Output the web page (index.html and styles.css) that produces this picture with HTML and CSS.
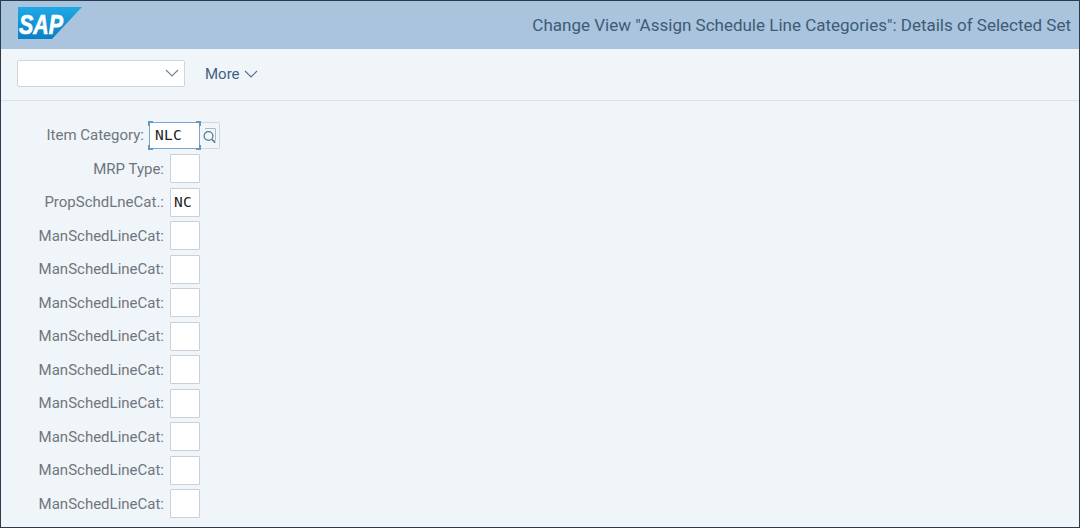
FILE: index.html
```html
<!DOCTYPE html>
<html lang="en">
<head>
    <meta charset="UTF-8">
    <meta name="viewport" content="width=device-width, initial-scale=1.0">
    <title>Change View</title>
    <link rel="stylesheet" href="styles.css">
</head>
<body>
    <div class="page">
        <header class="shell">
            <svg class="logo" width="64" height="32" viewBox="0 0 64 32">
                <defs>
                    <linearGradient id="sapBlue" x1="0" y1="0" x2="0" y2="1">
                        <stop offset="0" stop-color="#1fa9e6"/>
                        <stop offset="1" stop-color="#0a7fc4"/>
                    </linearGradient>
                </defs>
                <polygon points="0,0 64,0 34,32 0,32" fill="url(#sapBlue)"/>
                <text x="1" y="27" class="logo-text" textLength="44" lengthAdjust="spacingAndGlyphs">SAP</text>
            </svg>
            <h1>Change View "Assign Schedule Line Categories": Details of Selected Set</h1>
        </header>

        <div class="toolbar">
            <div class="select">
                <svg width="14" height="8" viewBox="0 0 14 8"><path d="M1 1l6 6 6-6" fill="none" stroke="#6f8294" stroke-width="1.1"/></svg>
            </div>
            <div class="more">More
                <svg width="14" height="8" viewBox="0 0 14 8"><path d="M1 1l6 6 6-6" fill="none" stroke="#4f6f8f" stroke-width="1.1"/></svg>
            </div>
        </div>

        <main class="form">
            <div class="row">
                <label>Item Category:</label>
                <div class="focus-wrap">
                    <div class="field wide focused">NLC</div>
                    <i class="corner tl"></i><i class="corner tr"></i><i class="corner bl"></i><i class="corner br"></i>
                </div>
                <div class="search">
                    <svg width="15" height="17" viewBox="0 0 15 17">
                        <path d="M3 1.5h10.5v12H12" fill="none" stroke="#a9bccd" stroke-width="1"/>
                        <circle cx="6.5" cy="9" r="4.4" fill="none" stroke="#4f7796" stroke-width="1.2"/>
                        <path d="M9.7 12.2l3.5 3.5" stroke="#4f7796" stroke-width="1.5"/>
                    </svg>
                </div>
            </div>
            <div class="row indented"><label>MRP Type:</label><div class="field"></div></div>
            <div class="row indented"><label>PropSchdLneCat.:</label><div class="field">NC</div></div>
            <div class="row indented"><label>ManSchedLineCat:</label><div class="field"></div></div>
            <div class="row indented"><label>ManSchedLineCat:</label><div class="field"></div></div>
            <div class="row indented"><label>ManSchedLineCat:</label><div class="field"></div></div>
            <div class="row indented"><label>ManSchedLineCat:</label><div class="field"></div></div>
            <div class="row indented"><label>ManSchedLineCat:</label><div class="field"></div></div>
            <div class="row indented"><label>ManSchedLineCat:</label><div class="field"></div></div>
            <div class="row indented"><label>ManSchedLineCat:</label><div class="field"></div></div>
            <div class="row indented"><label>ManSchedLineCat:</label><div class="field"></div></div>
            <div class="row indented"><label>ManSchedLineCat:</label><div class="field"></div></div>
        </main>
    </div>
</body>
</html>
```

FILE: styles.css
```css
html, body {
    margin: 0;
    padding: 0;
}
body {
    font-family: Roboto, Arial, sans-serif;
    background-color: #f0f5fa;
}
.page {
    box-sizing: border-box;
    width: 1080px;
    height: 528px;
    overflow: hidden;
    border: 1px solid #2b3a4c;
    background-color: #f0f5fa;
}
.shell {
    display: flex;
    align-items: center;
    justify-content: space-between;
    box-sizing: border-box;
    height: 48px;
    padding: 0 8px 0 17px;
    background-color: #a9c4dc;
}
.logo {
    display: block;
    margin-top: -4px;
}
.logo-text {
    font-family: "Liberation Sans", Arial, sans-serif;
    font-size: 28px;
    font-weight: bold;
    font-style: italic;
    fill: #fff;
    stroke: #fff;
    stroke-width: 0.7px;
}
.shell h1 {
    margin: 0;
    font-size: 17px;
    font-weight: 400;
    color: #3d5b78;
}
.toolbar {
    display: flex;
    align-items: center;
    box-sizing: border-box;
    height: 52px;
    padding: 0 0 3px 16px;
    border-bottom: 1px solid #dde3e9;
}
.select {
    display: flex;
    align-items: center;
    justify-content: flex-end;
    box-sizing: border-box;
    width: 168px;
    height: 27px;
    padding-right: 5px;
    background-color: #fff;
    border: 1px solid #cfd5db;
    border-radius: 2px;
}
.more {
    display: flex;
    align-items: center;
    gap: 4px;
    margin-left: 20px;
    padding-top: 2px;
    font-size: 15px;
    color: #40627f;
}
.form {
    padding-top: 17.4px;
}
.row {
    display: flex;
    align-items: center;
    height: 33.5px;
}
.row label {
    width: 148px;
    padding-right: 5px;
    box-sizing: border-box;
    text-align: right;
    font-size: 15px;
    color: #70767c;
    white-space: nowrap;
}
.row.indented label {
    width: 169px;
    padding-right: 6px;
}
.field {
    box-sizing: border-box;
    width: 30px;
    height: 29px;
    padding-left: 3px;
    line-height: 27px;
    font-family: "DejaVu Sans Mono", monospace;
    font-size: 14.5px;
    letter-spacing: 0.3px;
    color: #222;
    background-color: #fff;
    border: 1px solid #c9d0d7;
    border-radius: 1px;
}
.field.wide {
    width: 51px;
    height: 27px;
    padding-left: 5px;
    line-height: 25px;
}
.field.focused {
    border-color: #7fa6c8;
}
.focus-wrap {
    position: relative;
}
.corner {
    position: absolute;
    width: 3px;
    height: 3px;
    border: 1px solid #6b96ba;
}
.corner.tl { left: -1px; top: -1px; border-width: 2px 0 0 2px; }
.corner.tr { right: -1px; top: -1px; border-width: 2px 2px 0 0; }
.corner.bl { left: -1px; bottom: -1px; border-width: 0 0 2px 2px; }
.corner.br { right: -1px; bottom: -1px; border-width: 0 2px 2px 0; }
.search {
    display: flex;
    align-items: center;
    justify-content: center;
    box-sizing: border-box;
    width: 20px;
    height: 27px;
    background-color: #f3f6f9;
    border: 1px solid #cfd7df;
    border-left: 0;
    border-radius: 0 2px 2px 0;
}
```
